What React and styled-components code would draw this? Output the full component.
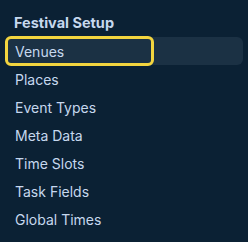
import React from 'react';
import styled, { createGlobalStyle } from 'styled-components';

const GlobalStyle = createGlobalStyle`
  html, body {
    margin: 0;
    padding: 0;
    background: #0b2134;
  }
  body {
    font-family: Inter, "Noto Sans", sans-serif;
  }
`;

const Sidebar = styled.nav`
  width: 248px;
  height: 242px;
  background: #0b2134;
  padding-top: 13px;
  box-sizing: border-box;
`;

const Heading = styled.div`
  padding-left: 14px;
  margin-bottom: 4px;
  font-size: 14.5px;
  line-height: 20px;
  font-weight: 700;
  color: #c6d8ee;
`;

const List = styled.ul`
  list-style: none;
  margin: 0;
  padding: 0;
`;

const Row = styled.li`
  margin: 0 5px 0 6px;
  height: 28px;
  border-radius: 6px;
  background: ${(p) => (p.$active ? '#1b3144' : 'transparent')};
`;

const Item = styled.a`
  display: flex;
  align-items: center;
  box-sizing: border-box;
  width: ${(p) => (p.$active ? '147px' : '100%')};
  height: 28px;
  padding: 1px 0 0 9px;
  border-radius: 5px;
  font-size: 14px;
  color: #c6d8ee;
  text-decoration: none;
  outline: ${(p) => (p.$active ? '3px solid #f3d53f' : 'none')};
  outline-offset: -2px;
`;

const items = ['Venues', 'Places', 'Event Types', 'Meta Data', 'Time Slots', 'Task Fields', 'Global Times'];

export default function App() {
  return (
    <>
      <GlobalStyle />
      <Sidebar>
        <Heading>Festival Setup</Heading>
        <List>
          {items.map((label, i) => (
            <Row key={label} $active={i === 0}>
              <Item href="#" $active={i === 0}>
                {label}
              </Item>
            </Row>
          ))}
        </List>
      </Sidebar>
    </>
  );
}
